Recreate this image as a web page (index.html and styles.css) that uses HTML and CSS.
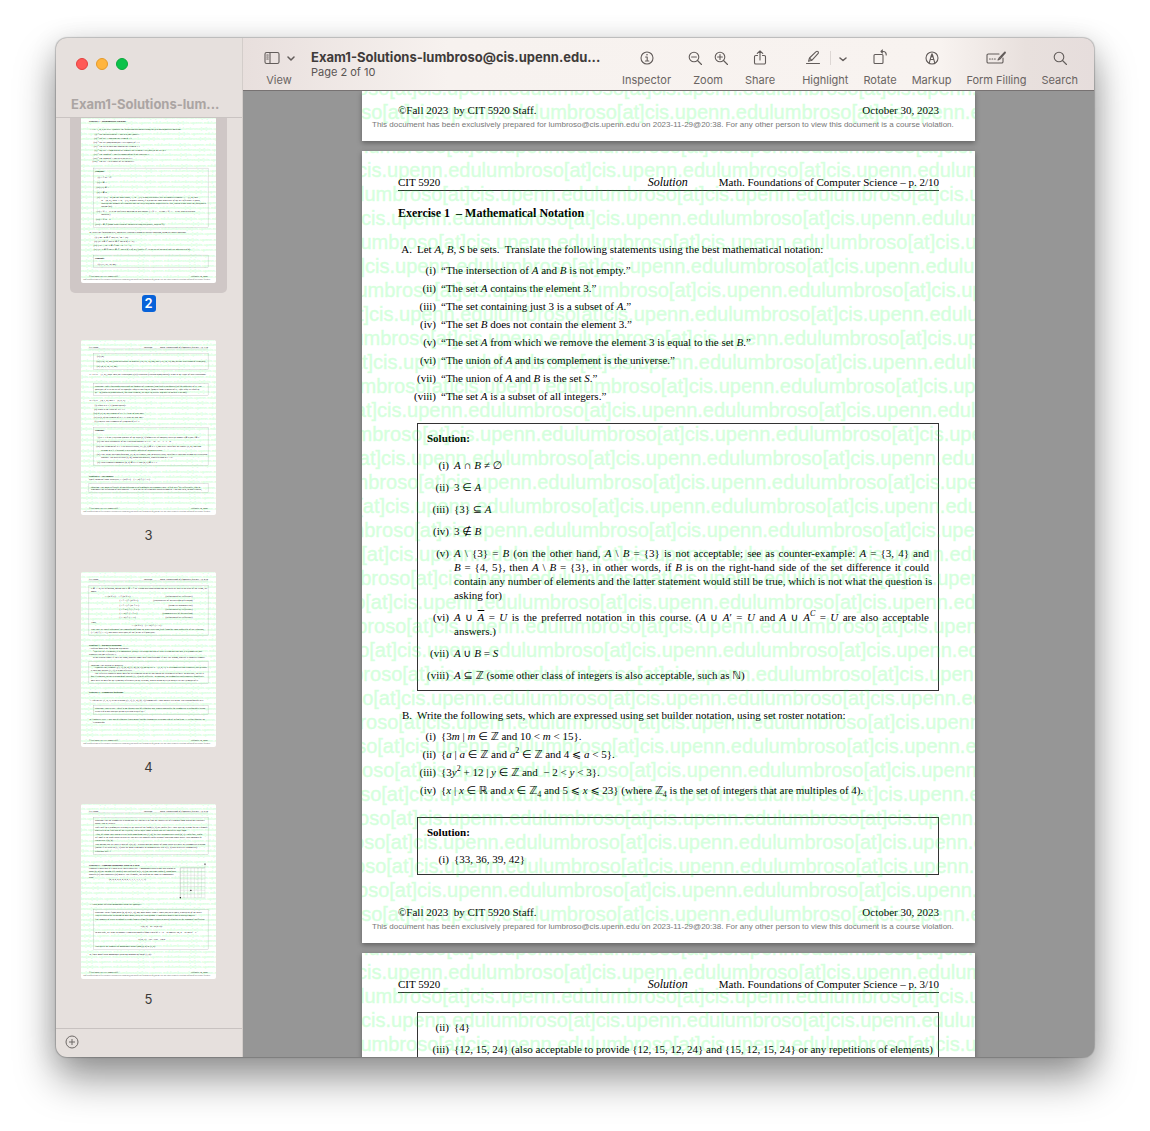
FILE: index.html
```html
<!DOCTYPE html>
<html lang="en">
<head>
<meta charset="utf-8">
<title>Exam1-Solutions</title>
<link rel="stylesheet" href="styles.css">
</head>
<body>
<main class="window">
  <aside class="sidebar">
    <header class="sidebar-head">
      <div class="lights">
        <button class="light red" aria-label="Close"></button>
        <button class="light amber" aria-label="Minimize"></button>
        <button class="light green" aria-label="Full screen"></button>
      </div>
      <h2 class="sidebar-title">Exam1-Solutions-lum...</h2>
    </header>
    <nav class="thumbs" aria-label="Pages">
      <a class="thumb selected" href="#page-2"><svg class="sheet" viewBox="0 0 613 793" data-page="2"></svg><span class="num">2</span></a>
      <a class="thumb" href="#page-3"><svg class="sheet" viewBox="0 0 613 793" data-page="3"></svg><span class="num">3</span></a>
      <a class="thumb" href="#page-4"><svg class="sheet" viewBox="0 0 613 793" data-page="4"></svg><span class="num">4</span></a>
      <a class="thumb" href="#page-5"><svg class="sheet" viewBox="0 0 613 793" data-page="5"></svg><span class="num">5</span></a>
    </nav>
    <footer class="sidebar-foot">
      <button class="plain" aria-label="Add page">
        <svg class="add" viewBox="0 0 14 14"><circle cx="7" cy="7" r="6"/><path d="M7 4v6M4 7h6"/></svg>
      </button>
    </footer>
  </aside>

  <section class="content">
    <header class="toolbar">
      <button class="tool view">
        <span class="icons">
          <svg class="icon" viewBox="0 0 18 18"><rect x="2" y="3.5" width="14" height="11" rx="1.6"/><path d="M7 3.5v11M3.8 6h1.4M3.8 8h1.4M3.8 10h1.4"/></svg>
          <svg class="chevron" viewBox="0 0 8 18"><path d="M1 8l3 3 3-3"/></svg>
        </span>
        <span class="label">View</span>
      </button>
      <div class="doc">
        <h1 class="doc-title">Exam1-Solutions-lumbroso@cis.upenn.edu...</h1>
        <p class="doc-sub">Page 2 of 10</p>
      </div>
      <button class="tool">
        <span class="icons"><svg class="icon" viewBox="0 0 18 18"><circle cx="9" cy="9" r="6"/><path d="M7.6 8h1.6v4M7.4 12h3.4"/><circle class="dot" cx="9" cy="5.8" r=".8"/></svg></span>
        <span class="label">Inspector</span>
      </button>
      <div class="tool">
        <span class="icons spread">
          <button class="plain" aria-label="Zoom out"><svg class="icon" viewBox="0 0 18 18"><circle cx="8" cy="8" r="4.8"/><path d="M11.5 11.5l4 4M5.6 8h4.8"/></svg></button>
          <button class="plain" aria-label="Zoom in"><svg class="icon" viewBox="0 0 18 18"><circle cx="8" cy="8" r="4.8"/><path d="M11.5 11.5l4 4M5.6 8h4.8M8 5.6v4.8"/></svg></button>
        </span>
        <span class="label">Zoom</span>
      </div>
      <button class="tool">
        <span class="icons"><svg class="icon" viewBox="0 0 18 18"><path d="M6.500 6.500H4.800A1.300 1.300 0 0 0 3.500 7.800v5.900A1.300 1.300 0 0 0 4.800 15h8.400a1.300 1.300 0 0 0 1.300-1.300V7.800a1.300 1.300 0 0 0-1.300-1.300h-1.700M9 11V2M6.300 4.400L9 1.800l2.700 2.600"/></svg></span>
        <span class="label">Share</span>
      </button>
      <div class="tool highlight">
        <span class="icons spread">
          <button class="plain" aria-label="Highlight"><svg class="icon" viewBox="0 0 18 18"><path d="M4.500 12.300l1-3.300 6.600-6.300a1.300 1.300 0 0 1 1.900 1.900L7.800 11.300zM5.500 9l2.300 2.300M2.500 14.500h13"/></svg></button>
          <span class="rule"></span>
          <button class="plain" aria-label="Highlight colour"><svg class="chevron" viewBox="0 0 8 18"><path d="M1 9l3 2.500 3-2.500"/></svg></button>
        </span>
        <span class="label">Highlight</span>
      </div>
      <button class="tool">
        <span class="icons"><svg class="icon" viewBox="0 0 18 18"><rect x="3" y="5.500" width="9" height="9" rx="1"/><path d="M10 2.500h2.200a3 3 0 0 1 3 3v.5M11.500 1L10 2.500 11.500 4"/></svg></span>
        <span class="label">Rotate</span>
      </button>
      <button class="tool">
        <span class="icons"><svg class="icon" viewBox="0 0 18 18"><circle cx="9" cy="9" r="6"/><path d="M6.200 14.200L8.300 6.400 9 4.800l.7 1.600 2.100 7.800M7.400 10.500h3.200M9 5v3"/></svg></span>
        <span class="label">Markup</span>
      </button>
      <button class="tool">
        <span class="icons"><svg class="icon wide" viewBox="0 0 22 18"><path d="M14 5H3.300A1.300 1.300 0 0 0 2 6.300v6.400A1.300 1.300 0 0 0 3.300 14h13.400a1.300 1.300 0 0 0 1.300-1.300V9M13 11l1-1.800L20 3M13 11l1.900-.9L20.500 3.600M4.500 10h.8M7 10h.8M9.500 10h.8"/></svg></span>
        <span class="label">Form Filling</span>
      </button>
      <button class="tool">
        <span class="icons"><svg class="icon" viewBox="0 0 18 18"><circle cx="8" cy="8" r="4.800"/><path d="M11.500 11.500l4 4"/></svg></span>
        <span class="label">Search</span>
      </button>
    </header>

    <div class="viewer">
      <article class="page tail">
        <footer class="page-foot">
          <div class="page-foot-row"><span>©Fall 2023&nbsp; by CIT 5920 Staff.</span><span>October 30, 2023</span></div>
          <p class="notice">This document has been exclusively prepared for lumbroso@cis.upenn.edu on 2023-11-29@20:38. For any other person to view this document is a course violation.</p>
        </footer>
        <div class="watermark" aria-hidden="true"></div>
      </article>

      <article class="page" id="page-2">
        <header class="page-head"><span>CIT 5920</span><em>Solution</em><span>Math. Foundations of Computer Science – p. 2/10</span></header>
        <h3 class="exercise">Exercise 1 &nbsp;– Mathematical Notation</h3>

        <p class="question"><span class="mark">A.</span><span>Let <i>A</i>, <i>B</i>, <i>S</i> be sets.&nbsp; Translate the following statements using the best mathematical notation:</span></p>
        <ol class="items">
          <li><span class="mark">(i)</span><span>“The intersection of <i>A</i> and <i>B</i> is not empty.”</span></li>
          <li><span class="mark">(ii)</span><span>“The set <i>A</i> contains the element 3.”</span></li>
          <li><span class="mark">(iii)</span><span>“The set containing just 3 is a subset of <i>A</i>.”</span></li>
          <li><span class="mark">(iv)</span><span>“The set <i>B</i> does not contain the element 3.”</span></li>
          <li><span class="mark">(v)</span><span>“The set <i>A</i> from which we remove the element 3 is equal to the set <i>B</i>.”</span></li>
          <li><span class="mark">(vi)</span><span>“The union of <i>A</i> and its complement is the universe.”</span></li>
          <li><span class="mark">(vii)</span><span>“The union of <i>A</i> and <i>B</i> is the set <i>S</i>.”</span></li>
          <li><span class="mark">(viii)</span><span>“The set <i>A</i> is a subset of all integers.”</span></li>
        </ol>

        <section class="solution">
          <h4>Solution:</h4>
          <ol class="answers">
            <li><span class="mark">(i)</span><span><i>A</i> ∩ <i>B</i> ≠ ∅</span></li>
            <li><span class="mark">(ii)</span><span>3 ∈ <i>A</i></span></li>
            <li><span class="mark">(iii)</span><span>{3} ⊆ <i>A</i></span></li>
            <li><span class="mark">(iv)</span><span>3 ∉ <i>B</i></span></li>
            <li><span class="mark">(v)</span><span class="para">
              <span class="line"><i>A</i> \ {3} = <i>B</i> (on the other hand, <i>A</i> \ <i>B</i> = {3} is not acceptable; see as counter-example: <i>A</i> = {3, 4} and</span>
              <span class="line"><i>B</i> = {4, 5}, then <i>A</i> \ <i>B</i> = {3}, in other words, if <i>B</i> is on the right-hand side of the set difference it could</span>
              <span class="line">contain any number of elements and the latter statement would still be true, which is not what the question is</span>
              <span class="line">asking for)</span></span></li>
            <li><span class="mark">(vi)</span><span class="para">
              <span class="line"><i>A</i> ∪ <i class="bar">A</i> = <i>U</i> is the preferred notation in this course. (<i>A</i> ∪ <i>A</i>′ = <i>U</i> and <i>A</i> ∪ <i>A<sup>C</sup></i> = <i>U</i> are also acceptable</span>
              <span class="line">answers.)</span></span></li>
            <li><span class="mark">(vii)</span><span><i>A</i> ∪ <i>B</i> = <i>S</i></span></li>
            <li><span class="mark">(viii)</span><span><i>A</i> ⊆ ℤ (some other class of integers is also acceptable, such as ℕ)</span></li>
          </ol>
        </section>

        <p class="question"><span class="mark">B.</span><span>Write the following sets, which are expressed using set builder notation, using set roster notation:</span></p>
        <ol class="items">
          <li><span class="mark">(i)</span><span>{3<i>m</i> | <i>m</i> ∈ ℤ and 10 &lt; <i>m</i> &lt; 15}.</span></li>
          <li><span class="mark">(ii)</span><span>{<i>a</i> | <i>a</i> ∈ ℤ and <i>a</i><sup>2</sup> ∈ ℤ and 4 ⩽ <i>a</i> &lt; 5}.</span></li>
          <li><span class="mark">(iii)</span><span>{3<i>y</i><sup>2</sup> + 12 | <i>y</i> ∈ ℤ and &nbsp;− 2 &lt; <i>y</i> &lt; 3}.</span></li>
          <li><span class="mark">(iv)</span><span>{<i>x</i> | <i>x</i> ∈ ℝ and <i>x</i> ∈ ℤ<sub>4</sub> and 5 ⩽ <i>x</i> ⩽ 23} (where ℤ<sub>4</sub> is the set of integers that are multiples of 4).</span></li>
        </ol>

        <section class="solution">
          <h4>Solution:</h4>
          <ol class="answers">
            <li><span class="mark">(i)</span><span>{33, 36, 39, 42}</span></li>
          </ol>
        </section>

        <footer class="page-foot">
          <div class="page-foot-row"><span>©Fall 2023&nbsp; by CIT 5920 Staff.</span><span>October 30, 2023</span></div>
          <p class="notice">This document has been exclusively prepared for lumbroso@cis.upenn.edu on 2023-11-29@20:38. For any other person to view this document is a course violation.</p>
        </footer>
        <div class="watermark" aria-hidden="true"></div>
      </article>

      <article class="page" id="page-3">
        <header class="page-head"><span>CIT 5920</span><em>Solution</em><span>Math. Foundations of Computer Science – p. 3/10</span></header>
        <section class="solution continued">
          <ol class="answers">
            <li><span class="mark">(ii)</span><span>{4}</span></li>
            <li><span class="mark">(iii)</span><span>{12, 15, 24} (also acceptable to provide {12, 15, 12, 24} and {15, 12, 15, 24} or any repetitions of elements)</span></li>
          </ol>
        </section>
        <div class="watermark" aria-hidden="true"></div>
      </article>
    </div>
  </section>
</main>
<script src="pages.js"></script>
</body>
</html>
```
FILE: styles.css
```css
* { box-sizing: border-box; }

body {
  margin: 0;
  min-height: 100vh;
  padding: 38px 56px 74px;
  background: #fff;
  font-family: Inter, "Liberation Sans", sans-serif;
  display: flex;
  overflow: hidden;
}

h1, h2, h3, h4, p, ol { margin: 0; padding: 0; }
ol { list-style: none; }
button { font: inherit; color: inherit; background: none; border: 0; padding: 0; }
svg { display: block; fill: none; }
.plain { display: block; }

.window {
  flex: 1;
  min-width: 0;
  height: calc(100vh - 112px);
  display: flex;
  border-radius: 11px;
  overflow: hidden;
  background: #969696;
  box-shadow: 0 0 1px 1px rgba(0, 0, 0, .2), 0 22px 40px rgba(0, 0, 0, .4), 0 4px 28px rgba(0, 0, 0, .12);
}

/* Sidebar */
.sidebar {
  flex: 0 0 187px;
  display: flex;
  flex-direction: column;
  background: #e6e0dd;
  border-right: 1px solid #d3cdca;
}
.sidebar-head { height: 80px; padding: 20px 15px 0; border-bottom: 1px solid #cac4c2; }
.lights { display: flex; gap: 8px; padding-left: 5px; }
.light { width: 12px; height: 12px; border-radius: 50%; border: 1px solid; }
.red { background: #ff5a57; border-color: #e4413f; }
.amber { background: #ffb53e; border-color: #e59a2a; }
.green { background: #0ac24a; border-color: #0aa83c; }
.sidebar-title { margin-top: 24px; font-size: 13px; line-height: 20px; font-weight: 700; color: #aba5a3; white-space: nowrap; }

.thumbs { flex: 1; min-height: 0; overflow: hidden; padding: 0 14px; }
.thumb {
  position: relative;
  width: 157px;
  height: 232px;
  display: flex;
  flex-direction: column;
  align-items: center;
  gap: 12px;
  color: #3c3a39;
  text-decoration: none;
}
.sheet { position: relative; flex: none; width: 135px; height: 175px; border-radius: 2px; background: #fff; }
.selected { height: 222px; }
.selected .sheet { margin-top: -10px; }
.selected::before { content: ""; position: absolute; inset: 0 0 47px; background: #cfc7c6; border-radius: 0 0 5px 5px; }
.num { font-size: 13px; line-height: 17px; min-width: 14px; text-align: center; }
.selected .num { background: #0762d9; color: #fff; font-weight: 600; border-radius: 3px; }

.sidebar-foot { height: 29px; border-top: 1px solid #c8c2c0; padding: 6px 9px; }
.add { width: 14px; height: 14px; stroke: #6d6866; stroke-width: 1; }

.sheet text { font-family: "Liberation Serif", "DejaVu Sans", serif; font-size: 11px; fill: #000; }
.sheet .b { font-weight: 700; }
.sheet .small { font-family: "Liberation Sans", sans-serif; font-size: 8px; fill: #666; }
.sheet .end { text-anchor: end; }
.sheet .wm { font-family: "Liberation Sans", sans-serif; font-size: 20px; fill: #00ff32; stroke: #00ff32; stroke-width: 1; opacity: .16; }
.sheet .frame { stroke: #888; stroke-width: 1; }
.sheet .grid { stroke: #aaa; stroke-width: 1; }

/* Toolbar */
.content { flex: 1; min-width: 0; display: flex; flex-direction: column; }
.toolbar {
  flex: none;
  height: 53px;
  padding: 11px 16px 0 20px;
  display: flex;
  align-items: flex-start;
  gap: 15px;
  color: #6a6462;
  background: linear-gradient(90deg, #e8dfdd, #f7f2ef 24%, #f8f3f0 82%, #e8e0dd 92%, #e6dddc);
  border-bottom: 1px solid #777272;
  white-space: nowrap;
}
.tool { display: flex; flex-direction: column; align-items: center; gap: 5px; }
.view { padding-right: 1px; }
.icons { display: flex; align-items: center; justify-content: center; height: 18px; gap: 6px; }
.spread { gap: 8px; }
.label { font-size: 11px; line-height: 16px; }
.icon { width: 18px; height: 18px; stroke: #625c5a; stroke-width: 1.1; stroke-linecap: round; stroke-linejoin: round; }
.wide { width: 22px; }
.dot { fill: #625c5a; stroke: none; }
.chevron { width: 8px; height: 18px; stroke: #625c5a; stroke-width: 1.5; stroke-linecap: round; stroke-linejoin: round; }
.rule { width: 1px; height: 14px; background: #ddd7d4; }
.highlight { margin-left: 12px; }
.doc { flex: 1; min-width: 0; }
.doc-title { font-size: 13px; line-height: 16px; font-weight: 700; color: #3f3b3a; }
.doc-sub { font-size: 11px; line-height: 14px; color: #5a5553; }

/* Document */
.viewer { flex: 1; min-height: 0; overflow: hidden; display: flex; flex-direction: column; align-items: center; gap: 10px; background: #969696; }
.page {
  flex: none;
  position: relative;
  overflow: hidden;
  width: 613px;
  min-height: 792px;
  padding: 24px 36px 8px;
  display: flex;
  flex-direction: column;
  background: #fff;
  box-shadow: 0 2px 5px rgba(0, 0, 0, .35);
  color: #000;
  font: 11px/14px "Liberation Serif", "DejaVu Sans", serif;
}
.tail { min-height: 50px; padding-top: 0; }
.page-head { display: flex; padding-bottom: 1px; border-bottom: 1px solid #333; }
.page-head em { margin: 0 31px 0 auto; font-size: 12px; }
.exercise { margin-top: 14px; font-size: 12px; line-height: 16px; }
.question { display: flex; gap: 5px; margin-top: 21px; }
.question .mark { width: 14px; text-align: right; }
.items { margin-top: 5px; line-height: 18px; }
.items li, .answers li { display: flex; gap: 5px; white-space: nowrap; }
.items .mark { width: 38px; text-align: right; }
.solution { margin: 18px 0 0 19px; padding: 7px 9px 8px; border: 1px solid #333; }
.solution h4 { font-size: 11px; margin-bottom: 13px; }
.solution + .question { margin-top: 17px; }
.answers { display: flex; flex-direction: column; gap: 8px; }
.answers .mark { flex: none; width: 22px; display: flex; justify-content: flex-end; }
.continued { margin-top: 19px; }
.para { flex: 1; min-width: 0; }
.line { display: block; text-align: justify; text-align-last: justify; }
.line:last-child { text-align-last: left; }
.bar { text-decoration: overline; }
sup, sub { font-size: 8px; line-height: 0; }
.page-foot { margin-top: auto; }
.page-foot-row { display: flex; justify-content: space-between; }
.notice { font: 8px/16px "Liberation Sans", sans-serif; color: #777; white-space: nowrap; margin: 0 -26px; }

.watermark {
  position: absolute;
  left: 0;
  top: -17px;
  font: 20px/24px "Liberation Sans", sans-serif;
  color: #00ff32;
  -webkit-text-stroke: 0.5px #00ff32;
  opacity: .16;
  white-space: nowrap;
  pointer-events: none;
}
.tail .watermark { top: auto; bottom: 17px; }
```
FILE: pages.js
```js
// Watermark rows: odd rows drift right, even rows drift left, two pixels a row.
const MARK = 'lumbroso[at]cis.upenn.edu'.repeat(4);
const ROWS = 33;
const rowStart = n => (n % 2 ? 2 * (n - 1) - 115 : 2 - 2 * n);

document.querySelectorAll('.watermark').forEach(box => {
  for (let n = 0; n < ROWS; n++) {
    const row = document.createElement('div');
    row.textContent = MARK;
    row.style.marginLeft = rowStart(n) + 'px';
    box.append(row);
  }
});

// Thumbnails. Text entries are [x, y centre, text, class]; boxes are [x, top, bottom].
const pages = {
  2: {
    boxes: [[55, 272, 540], [55, 667, 724]],
    text: [
      [36, 62, 'Exercise 1  – Mathematical Notation', 'b'],
      [39, 98, 'A.  Let A, B, S be sets.  Translate the following statements using the best mathematical notation:'],
      [63, 120, '(i)  “The intersection of A and B is not empty.”'],
      [60, 138, '(ii)  “The set A contains the element 3.”'],
      [57, 156, '(iii)  “The set containing just 3 is a subset of A.”'],
      [58, 173, '(iv)  “The set B does not contain the element 3.”'],
      [61, 191, '(v)  “The set A from which we remove the element 3 is equal to the set B.”'],
      [58, 208, '(vi)  “The union of A and its complement is the universe.”'],
      [55, 226, '(vii)  “The union of A and B is the set S.”'],
      [52, 243, '(viii)  “The set A is a subset of all integers.”'],
      [64, 287, 'Solution:', 'b'],
      [76, 313, '(i)  A ∩ B ≠ ∅'],
      [73, 336, '(ii)  3 ∈ A'],
      [70, 358, '(iii)  {3} ⊆ A'],
      [71, 381, '(iv)  3 ∉ B'],
      [74, 403, '(v)  A \\ {3} = B (on the other hand, A \\ B = {3} is not acceptable; see as counter-example: A = {3, 4} and'],
      [92, 417, 'B = {4, 5}, then A \\ B = {3}, in other words, if B is on the right-hand side of the set difference it could'],
      [92, 430, 'contain any number of elements and the latter statement would still be true, which is not what the question is'],
      [92, 444, 'asking for)'],
      [71, 467, '(vi)  A ∪ A = U is the preferred notation in this course.  (A ∪ A′ = U and A ∪ Aᶜ = U are also acceptable'],
      [92, 480, 'answers.)'],
      [68, 503, '(vii)  A ∪ B = S'],
      [65, 526, '(viii)  A ⊆ ℤ (some other class of integers is also acceptable, such as ℕ)'],
      [39, 564, 'B.  Write the following sets, which are expressed using set builder notation, using set roster notation:'],
      [63, 587, '(i)  {3m | m ∈ ℤ and 10 < m < 15}.'],
      [60, 604, '(ii)  {a | a ∈ ℤ and a² ∈ ℤ and 4 ⩽ a < 5}.'],
      [57, 622, '(iii)  {3y² + 12 | y ∈ ℤ and − 2 < y < 3}.'],
      [58, 639, '(iv)  {x | x ∈ ℝ and x ∈ ℤ₄ and 5 ⩽ x ⩽ 23} (where ℤ₄ is the set of integers that are multiples of 4).'],
      [64, 682, 'Solution:', 'b'],
      [76, 709, '(i)  {33, 36, 39, 42}']
    ]
  },
  3: {
    boxes: [[55, 60, 133], [55, 197, 251], [55, 398, 569], [36, 650, 693]],
    text: [
      [73, 74, '(ii)  {4}'],
      [70, 97, '(iii)  {12, 15, 24} (also acceptable to provide {12, 15, 12, 24} and {15, 12, 15, 24} or any repetitions of elements)'],
      [71, 120, '(iv)  {4, 8, 12, 16, 20}'],
      [39, 157, 'C.  Let U = {1, 2}, what does the expression |P(U)| represent (explain using words)?  What is the value of this expression?'],
      [64, 210, 'Solution:  This expression represents the number of elements (also called cardinality) of the powerset of U.  The'],
      [64, 224, 'powerset of U is the set of all possible subsets that can be formed from elements of U.  This value is equal to'],
      [64, 238, '2² = 4 (when creating subsets, for each element, we have to decide whether to include it or not).'],
      [39, 275, 'D.  Let S = {4, 7, 9} and T = {a, b, c}.'],
      [63, 298, '(i)  What is S × T (using words)?'],
      [60, 316, '(ii)  What is the value of |S × T|?'],
      [57, 333, '(iii)  Is {a, 4} an element of S × T? Why or why not?'],
      [58, 351, '(iv)  Is (a, 4) an element of S × T? Why or why not?'],
      [61, 369, '(v)  Provide two examples of elements of S × T.'],
      [64, 410, 'Solution:', 'b'],
      [76, 439, '(i)  S × T is the Cartesian product of the pairs (s, t) formed by all possible ways to choose s ∈ S and t ∈ T.'],
      [73, 460, '(ii)  The total cardinality of the Cartesian product |S × T| = |S| · |T| = 3 · 3 = 9.'],
      [70, 484, '(iii)  The elements of S × T are ordered pairs, i.e., (s, t) ∈ S × T, not sets. Therefore the subset {a, 4} does not'],
      [92, 498, 'belong to S × T because it is a subset instead of an ordered pair.'],
      [71, 519, '(iv)  Like in the previous question, {a, 4} is a subset, not an ordered pair, therefore it does not belong to a Cartesian'],
      [92, 532, 'product.  The ordered pair (a, 4), using parentheses, would belong to T × S.'],
      [74, 555, '(v)  Two examples among 9: (4, a) ∈ S × T and (9, c) ∈ S × T.'],
      [36, 617, 'Exercise 2  – Set Identity', 'b'],
      [36, 632, 'Prove using the right identities: A \\ (B ∪ C) = (A \\ B) ∩ (A \\ C).'],
      [45, 666, 'Solution:  The main difficulty in this question is to remember to recognize that \\ refers to a “set difference”, and to'],
      [45, 679, 'remember the definition of this concept.  A \\ B is the set of elements which belong to A but not to B, in other words,']
    ]
  },
  4: {
    boxes: [[36, 59, 287], [36, 405, 504], [55, 604, 645]],
    text: [
      [45, 74, 'x ∈ A \\ B, by definition, means that x ∈ A ∩ B′.  Using this substitution and the rules we saw at the start of the exam, we'],
      [45, 88, 'show:'],
      [106, 112, 'A \\ (B ∪ C) = A ∩ (B ∪ C)′'], [507, 112, '(definition of set difference)', 'end'],
      [166, 130, '= (A ∩ A) ∩ (B ∪ C)′'], [507, 130, '(distributivity of intersection over union)', 'end'],
      [166, 150, '= (A ∩ A) ∩ (B′ ∩ C′)'], [507, 150, '(using De Morgan’s law)', 'end'],
      [166, 168, '= (A ∩ B′) ∩ (A ∩ C′)'], [507, 168, '(definition of set difference)', 'end'],
      [166, 186, '= (A \\ B) ∩ (A ∩ C′)'], [507, 186, '(commutativity of intersection)', 'end'],
      [166, 203, '= (A \\ B) ∩ (A \\ C)'], [507, 203, '(definition of set difference)', 'end'],
      [45, 227, 'Thus,'],
      [228, 242, 'A \\ (B ∪ C) = (A \\ B) ∩ (A \\ C)'],
      [45, 259, 'Note that we could also make the computation from the other direction, start from the right-hand side of the equation,'],
      [45, 272, '(A \\ B) ∩ (A \\ C), and apply rules until we get to the left-hand side.'],
      [36, 331, 'Exercise 3  – Reflexive Relations', 'b'],
      [36, 345, 'A student makes the following statement:'],
      [54, 359, '“On a set of 3 elements, it is impossible to have a relation that has at least 5 elements and that it is symmetric and'],
      [36, 372, 'transitive but not reflexive.”'],
      [54, 386, 'Is the student right? If they are right, provide some brief justifications. If they are wrong, provide a counter-example.'],
      [45, 421, 'Solution:  The student is incorrect.'],
      [63, 434, 'Consider the example {(1, 1), (2, 2), (1, 2), (2, 1)} on the set S = {1, 2, 3}. It is symmetric and transitive but because'],
      [45, 446, 'it does not include (3, 3), it is not reflexive.'],
      [63, 461, 'The reflexive property must hold for all elements in the set on which the relation is defined. In this case, the set S'],
      [45, 475, 'has 3 elements, so the relation must include (3, 3) to be reflexive. In contrast, the symmetric and transitive properties'],
      [45, 489, 'only need to hold for the elements referenced in the relation, which do not need to involve all the elements of S.'],
      [36, 546, 'Exercise 4  – Symmetric Relations', 'b'],
      [39, 583, 'A.  On the set {1, 2, 3} is the relation {(1, 1), (1, 2), (2, 1)} symmetric? Your answer yes or no.  No explanation needed.'],
      [64, 619, 'Solution:  This is true.  There is no distinct pair of elements that would contradict the symmetric relation on it being'],
      [64, 632, 'related to 2 and whether or not 2 is also related to 1.'],
      [39, 670, 'B.  Consider a set A that has n elements.  How many distinct symmetric relations can be defined on A? Please provide an'],
      [55, 684, 'explanation.']
    ]
  },
  5: {
    boxes: [[55, 59, 228], [55, 477, 660]],
    grid: true,
    text: [
      [64, 74, 'Solution:  For the symmetric relation part we just need to find the correct set of elements from which any arbitrary'],
      [64, 89, 'subset can be picked.'],
      [64, 106, 'Note that for a symmetric relation all the pairs of the form (x, x) are totally free. That was the reason for the example'],
      [64, 120, 'provided in the first part of the exercise. So we have those n pairs that we can safely pick from.'],
      [64, 136, 'Also, we know that whenever we pick something like (1, 2), we will automatically pick (2, 1).  Therefore, when'],
      [64, 150, 'we look at the other pairs to pick we just need to consider pairs without worrying about order. This amounts to'],
      [64, 163, 'essentially C(n, 2).'],
      [64, 182, 'That means that we have a total of C(n, 2) + n pairs and any subset of those pairs will give us a symmetric relation'],
      [64, 195, '(again: if we pick an (x, y) pair we must remember to automatically add a (y, x) pair to keep it symmetric).'],
      [64, 215, 'Equation: 2ⁿ⁽ⁿ⁺¹⁾'],
      [36, 277, 'Exercise 5  – Counting Monotonic Paths in a Grid', 'b'],
      [36, 290, 'Consider a grid that is 7 units wide and 8 units tall. A monotonic path is one that begins at'],
      [36, 304, 'point (0, 0) (the bottom left corner) and traverses to (7, 8) (the top right corner), using only'],
      [36, 318, 'upward (U) and rightward (R) moves.  For example, the path on the right is a monotonic'],
      [36, 330, 'path:'],
      [128, 343, '(0, 0, 0, 0, 0, 0, 0, 0, 1, 1, 1, 1, 1, 1, 1)'],
      [39, 454, 'A.  How many different monotonic paths are possible?'],
      [64, 492, 'Solution:  To get from point (0, 0) to (7, 8), one must move right 7 times and up 8 times, regardless of the order.'],
      [64, 505, 'This is equivalent to asking in how many ways we can arrange 7 rightward moves and 8 upward moves.'],
      [64, 523, 'The number of ways to choose k items from n items (without regard to order) is given by the binomial coefficient:'],
      [272, 555, 'C(n, k) = n! / k!(n−k)!'],
      [64, 582, 'In this case, we want to choose 7 rightward moves from a total of 7 + 8 = 15 moves. So, n = 15 and k = 7.'],
      [260, 614, 'C(15, 7) = 15! / 7!8! = 6435'],
      [64, 645, 'This gives the number of monotonic paths from (0, 0) to (7, 8).'],
      [39, 684, 'B.  How many such monotonic paths go through the point (3, 2)?']
    ]
  }
};

const NOTICE = document.querySelector('.notice').textContent;

function add(svg, tag, attrs, text) {
  const el = document.createElementNS('http://www.w3.org/2000/svg', tag);
  for (const key in attrs) el.setAttribute(key, attrs[key]);
  if (text) el.textContent = text;
  svg.append(el);
}

document.querySelectorAll('.sheet').forEach(svg => {
  const number = svg.dataset.page;
  const page = pages[number];
  const lines = [
    [36, 31, 'CIT 5920'],
    [286, 31, 'Solution'],
    [577, 31, `Math. Foundations of Computer Science – p. ${number}/10`, 'end'],
    ...page.text,
    [36, 762, '©Fall 2023  by CIT 5920 Staff.'],
    [577, 762, 'October 30, 2023', 'end'],
    [10, 776, NOTICE, 'small']
  ];
  add(svg, 'path', { class: 'frame', d: 'M36 39.5h541' });
  page.boxes.forEach(([x, top, bottom]) =>
    add(svg, 'rect', { class: 'frame', x, y: top, width: 577 - x, height: bottom - top }));
  if (page.grid) {
    let d = '';
    for (let i = 0; i <= 7; i++) d += `M${451 + i * 16} 289v136`;
    for (let i = 0; i <= 8; i++) d += `M451 ${289 + i * 17}h112`;
    add(svg, 'path', { class: 'grid', d });
    add(svg, 'path', { class: 'frame', d: 'M451 425V289h112v-18' });
    [[451, 425], [499, 391], [563, 272]].forEach(([cx, cy]) => add(svg, 'circle', { cx, cy, r: 3, fill: '#000' }));
  }
  lines.forEach(([x, y, text, cls]) => add(svg, 'text', { x, y: y + 3, class: cls || '' }, text));
  for (let n = 0; n < ROWS; n++) add(svg, 'text', { class: 'wm', x: rowStart(n), y: 2 + 24 * n }, MARK);
});
```
